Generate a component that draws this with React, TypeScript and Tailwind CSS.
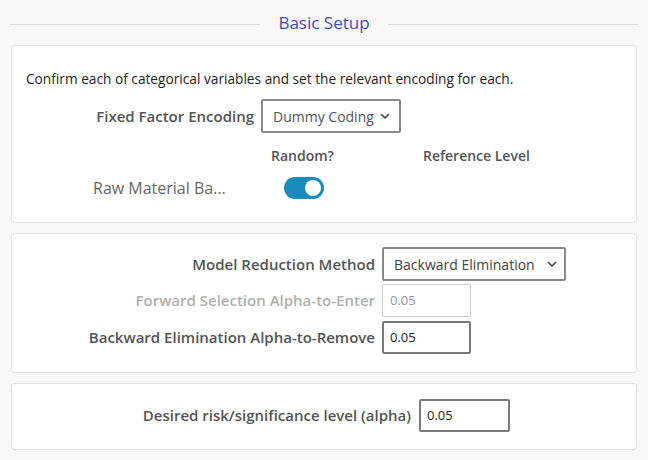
import React from "react";

/* Basic Setup panel: encoding, model reduction, alpha */

function Chevron() {
  return (
    <svg width="12" height="12" viewBox="0 0 12 12" className="shrink-0">
      <path d="M2.5 4.5 L6 8 L9.5 4.5" fill="none" stroke="#444" strokeWidth="1.6" strokeLinecap="round" strokeLinejoin="round" />
    </svg>
  );
}

function Toggle() {
  return (
    <div className="w-[40px] h-[22px] rounded-full bg-[#1a8bbd] flex items-center justify-end pr-[3px]">
      <div className="w-[16px] h-[16px] rounded-full bg-white" />
    </div>
  );
}

function NumInput({ disabled, w }: { disabled?: boolean; w: string }) {
  return (
    <div
      className={
        disabled
          ? `${w} h-[33px] border border-[#cfcfcf] rounded-[2px] flex items-center px-[7px] text-[13px] text-[#999]`
          : `${w} h-[33px] border-2 border-[#7a7a7a] rounded-[2px] flex items-center px-[6px] text-[13px] text-[#222]`
      }
    >
      0.05
    </div>
  );
}

export default function App() {
  return (
    <div className="w-[648px] h-[460px] bg-[#f8f8f8] font-['Open_Sans',sans-serif] overflow-hidden">
      {/* header */}
      <div className="px-[10px] pt-[11px] pb-[8px]">
        <div className="flex items-center h-[26px]">
          <div className="flex-1 h-px bg-[#dedede]" />
          <div className="px-[18px] text-[17px] text-[#3f51b5] leading-[26px] -mt-[2px]">Basic Setup</div>
          <div className="flex-1 h-px bg-[#dedede]" />
        </div>
      </div>

      <div className="flex flex-col gap-[10px] px-[11px]">
        {/* card 1 */}
        <div className="h-[178px] bg-white border border-[#e2e2e2] rounded-[4px] pt-[23px] pl-[14px]">
          <p className="text-[13.7px] text-[#222] leading-[20px]">
            Confirm each of categorical variables and set the relevant encoding for each.
          </p>
          <div className="flex items-center mt-[10px]">
            <div className="w-[228px] text-right text-[15px] font-semibold text-[#555]">Fixed Factor Encoding</div>
            <div className="ml-[7px] w-[140px] h-[34px] border-2 border-[#8a8a8a] rounded-[2px] flex items-center justify-between pl-[10px] pr-[8px]">
              <span className="text-[14px] font-medium text-[#555]">Dummy Coding</span>
              <Chevron />
            </div>
          </div>
          <div className="flex items-center mt-[11px] h-[22px] text-[14px] font-semibold text-[#555]">
            <div className="ml-[245px]">Random?</div>
            <div className="ml-[89px]">Reference Level</div>
          </div>
          <div className="flex items-center mt-[11px] h-[22px]">
            <div className="ml-[67px] w-[150px] text-[16px] text-[#666] truncate">Raw Material Ba...</div>
            <div className="ml-[41px]">
              <Toggle />
            </div>
          </div>
        </div>

        {/* card 2 */}
        <div className="h-[140px] bg-white border border-[#e2e2e2] rounded-[4px] pt-[13px] flex flex-col gap-[3px]">
          <div className="flex items-center">
            <div className="w-[363px] text-right text-[15px] font-semibold text-[#555]">Model Reduction Method</div>
            <div className="ml-[7px] w-[184px] h-[34px] border-2 border-[#8a8a8a] rounded-[2px] flex items-center justify-between pl-[10px] pr-[6px]">
              <span className="text-[14px] font-medium text-[#444]">Backward Elimination</span>
              <Chevron />
            </div>
          </div>
          <div className="flex items-center">
            <div className="w-[363px] text-right text-[15px] font-semibold text-[#b0b0b0]">Forward Selection Alpha-to-Enter</div>
            <div className="ml-[7px]">
              <NumInput disabled w="w-[89px]" />
            </div>
          </div>
          <div className="flex items-center mt-[1px]">
            <div className="w-[363px] text-right text-[15px] font-semibold text-[#555]">Backward Elimination Alpha-to-Remove</div>
            <div className="ml-[7px]">
              <NumInput w="w-[89px]" />
            </div>
          </div>
        </div>

        {/* card 3 */}
        <div className="h-[67px] bg-white border border-[#e2e2e2] rounded-[4px] pt-[15px]">
          <div className="flex items-center">
            <div className="w-[399px] text-right text-[15px] font-semibold text-[#555]">Desired risk/significance level (alpha)</div>
            <div className="ml-[8px]">
              <NumInput w="w-[91px]" />
            </div>
          </div>
        </div>
      </div>
    </div>
  );
}
